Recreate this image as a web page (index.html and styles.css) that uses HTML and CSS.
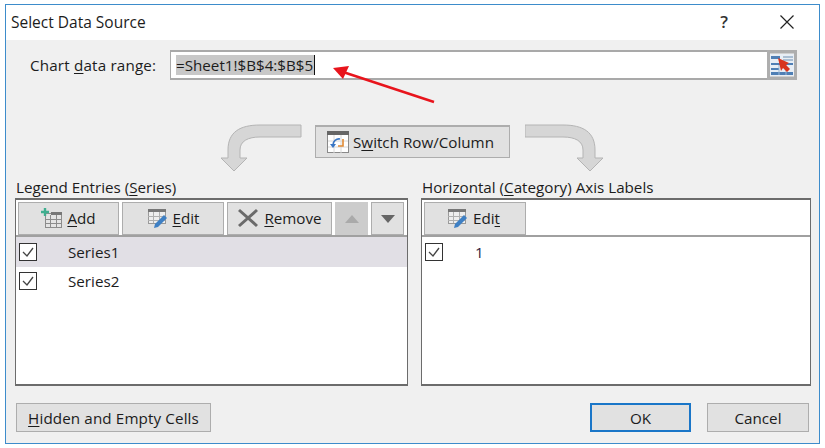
FILE: index.html
```html
<!DOCTYPE html>
<html lang="en">
<head>
<meta charset="utf-8">
<title>Select Data Source</title>
<link rel="stylesheet" href="styles.css">
</head>
<body>
<div class="dialog">
  <header class="titlebar">
    <span class="title">Select Data Source</span>
    <span class="help">?</span>
    <svg class="close" width="14" height="14" viewBox="0 0 14 14"><path d="M0.500 0.500L13.500 13.500M13.500 0.500L0.500 13.500" stroke="#222" stroke-width="1.200" fill="none"/></svg>
  </header>
  <main class="content">
    <div class="range-row">
      <span class="range-label">Chart <u>d</u>ata range:</span>
      <div class="range-field">
        <span class="range-value"><span class="selected">=Sheet1!$B$4:$B$5</span></span>
        <div class="picker">
          <svg width="24" height="24" viewBox="0 0 24 24">
            <rect x="0" y="1" width="24" height="22" fill="#e8eef5"/>
            <path d="M1 3h9v3H1zM1 10h22v2H1zM1 15h8v2H1zM1 19h22v3H1z" fill="#4f7fb5"/>
            <path d="M13 4h10M13 7h10" stroke="#6d8fb0" stroke-width="1"/>
            <path d="M9 12v10M16 12v10" stroke="#9ab6d2" stroke-width="1"/>
            <path d="M8 5l11 5-3 2 4 4-3 3-4-4-2 3z" fill="#d8351f"/>
          </svg>
        </div>
      </div>
    </div>
    <div class="swap-row">
      <svg class="swap-arrow" width="82" height="48" viewBox="0 0 82 48">
        <path d="M81 1H40C20 1 8 8 8 26V34H1L14 47 27 34H20V26C20 17 28 13 40 13H81Z" fill="#d6d6d6" stroke="#b4b4b4"/>
      </svg>
      <button class="btn switch">
        <svg width="22" height="22" viewBox="0 0 22 22">
          <rect x="0.500" y="0.500" width="21" height="21" fill="#fff" stroke="#8a8a8a"/>
          <rect x="0" y="0" width="22" height="4" fill="#666"/>
          <path d="M7 4v18M14 4v18M1 10h20M1 16h20" stroke="#d8d8d8"/>
          <path d="M13 8a6 6 0 0 0-7 6" stroke="#3a76c4" stroke-width="1.600" fill="none"/>
          <path d="M3 13l3 4 3-4z" fill="#3a76c4"/>
          <path d="M16 8v7h-5" stroke="#e08a35" stroke-width="1.600" fill="none"/>
        </svg>
        <span>S<u>w</u>itch Row/Column</span>
      </button>
      <svg class="swap-arrow" width="82" height="48" viewBox="0 0 82 48">
        <path d="M0 1H38C58 1 70 8 70 26V34H78L65 47 52 34H58V26C58 17 50 13 38 13H0Z" fill="#d6d6d6" stroke="#b4b4b4"/>
      </svg>
    </div>
    <div class="panels">
      <section class="panel panel-left">
        <div class="panel-title">Legend Entries (<u>S</u>eries)</div>
        <div class="listbox">
          <div class="toolbar">
            <button class="btn tool tool-add">
              <svg width="22" height="20" viewBox="0 0 22 20">
                <rect x="4.500" y="5.500" width="16" height="14" fill="#e4e4e4" stroke="#8c8c8c"/>
                <rect x="10" y="4" width="11" height="3" fill="#777"/>
                <path d="M9.500 7v12M15.500 7v12M4 11.500h17M4 15.500h17" stroke="#8c8c8c"/>
                <path d="M4 0v8M0 4h8" stroke="#3fae8f" stroke-width="2.400"/>
              </svg>
              <span><u>A</u>dd</span>
            </button>
            <button class="btn tool tool-edit">
              <svg width="22" height="22" viewBox="0 0 22 22">
                <rect x="1.500" y="2.500" width="17" height="14" fill="#eee" stroke="#9a9a9a"/>
                <rect x="1" y="2" width="18" height="3" fill="#777"/>
                <path d="M6.500 5v11M12.500 5v11M1 9.500h17M1 13.500h17" stroke="#b0b0b0"/>
                <path d="M7 21l1-4 9-9 3 3-9 9z" fill="#3f80c4"/>
              </svg>
              <span><u>E</u>dit</span>
            </button>
            <button class="btn tool tool-remove">
              <svg width="22" height="20" viewBox="0 0 22 20"><path d="M2 2L20 18M20 2L2 18" stroke="#6a6a6a" stroke-width="3" fill="none"/></svg>
              <span><u>R</u>emove</span>
            </button>
            <button class="btn tool tool-move disabled" aria-label="Up"><svg width="14" height="8" viewBox="0 0 14 8"><path d="M7 0L14 8H0z" fill="#aaa"/></svg></button>
            <button class="btn tool tool-move" aria-label="Down"><svg width="14" height="8" viewBox="0 0 14 8"><path d="M0 0H14L7 8z" fill="#666"/></svg></button>
          </div>
          <div class="row row-selected"><span class="check"><svg width="12" height="10" viewBox="0 0 12 10"><path d="M1 5l4 4 6-8" stroke="#444" stroke-width="1.300" fill="none"/></svg></span><span class="row-text">Series1</span></div>
          <div class="row"><span class="check"><svg width="12" height="10" viewBox="0 0 12 10"><path d="M1 5l4 4 6-8" stroke="#444" stroke-width="1.300" fill="none"/></svg></span><span class="row-text">Series2</span></div>
        </div>
      </section>
      <section class="panel panel-right">
        <div class="panel-title">Horizontal (<u>C</u>ategory) Axis Labels</div>
        <div class="listbox">
          <div class="toolbar">
            <button class="btn tool tool-edit2">
              <svg width="22" height="22" viewBox="0 0 22 22">
                <rect x="1.500" y="2.500" width="17" height="14" fill="#eee" stroke="#9a9a9a"/>
                <rect x="1" y="2" width="18" height="3" fill="#777"/>
                <path d="M6.500 5v11M12.500 5v11M1 9.500h17M1 13.500h17" stroke="#b0b0b0"/>
                <path d="M7 21l1-4 9-9 3 3-9 9z" fill="#3f80c4"/>
              </svg>
              <span>Edi<u>t</u></span>
            </button>
          </div>
          <div class="row"><span class="check"><svg width="12" height="10" viewBox="0 0 12 10"><path d="M1 5l4 4 6-8" stroke="#444" stroke-width="1.300" fill="none"/></svg></span><span class="row-text">1</span></div>
        </div>
      </section>
    </div>
    <div class="footer">
      <button class="btn foot-hidden"><span><u>H</u>idden and Empty Cells</span></button>
      <div class="foot-right">
        <button class="btn foot-btn foot-ok default">OK</button>
        <button class="btn foot-btn">Cancel</button>
      </div>
    </div>
  </main>
  <svg class="annotation" width="104" height="42" viewBox="0 0 104 42">
    <path d="M101 39L10 9" stroke="#e8141c" stroke-width="2.500" fill="none"/>
    <path d="M0 5L16 3 10 16z" fill="#e8141c"/>
  </svg>
</div>
</body>
</html>
```
FILE: styles.css
```css
* { box-sizing: border-box; }
html, body { margin: 0; padding: 0; background: #fff; }
body { width: 825px; height: 448px; overflow: hidden; font-family: "Open Sans", "Noto Sans", sans-serif; font-size: 15.200px; color: #1c1c1c; }
u { text-underline-offset: 2px; }
.dialog { position: relative; margin: 4px 0 0 5px; width: 815px; height: 440px; border: 1px solid #3d8ccb; background: #f0f0f0; display: flex; flex-direction: column; }
.titlebar { height: 35px; background: #fff; display: flex; align-items: center; padding: 0 0 2px 5px; flex: none; }
.title { font-size: 15.500px; flex: 1; }
.help { font-size: 17px; font-weight: 600; width: 20px; margin-right: 46px; color: #333; text-align: center; }
.close { margin-right: 25px; }
.content { flex: 1; display: flex; flex-direction: column; padding: 10px 9px 11px 9px; }
.range-row { display: flex; align-items: center; height: 30px; padding-left: 15px; padding-right: 13px; }
.range-label { width: 140px; flex: none; letter-spacing: 0.180px; }
.range-field { flex: 1; height: 30px; display: flex; align-items: center; background: #fff; border: 1px solid #a9a9a9; border-width: 2px 1px 2px 1px; }
.range-value { flex: 1; padding-left: 5px; line-height: 20px; }
.selected { background: #c8c8c8; border-right: 1.500px solid #111; display: inline-block; line-height: 20px; padding-right: 1px; }
.picker { width: 30px; height: 30px; margin: -2px -1px -2px 0; background: #d0d0d0; border: 3px solid #aeaeae; display: flex; align-items: center; justify-content: center; flex: none; overflow: hidden; }
.swap-row { display: flex; align-items: flex-start; height: 48px; margin-top: 44px; padding-left: 205px; }
.swap-arrow { flex: none; }
.btn { font: inherit; color: inherit; background: #e1e1e1; border: 1px solid #adadad; display: flex; align-items: center; justify-content: center; gap: 5px; padding: 0; }
.switch { width: 195px; height: 33px; margin: 1px 15px 0 13px; border-width: 2px 1px 1px; gap: 4px; padding-right: 4px; }
.panels { display: flex; justify-content: space-between; margin-top: 5px; height: 209px; }
.panel { display: flex; flex-direction: column; }
.panel-left { width: 393px; }
.panel-right { width: 390px; margin-right: -1px; }
.panel-title { height: 21px; line-height: 20px; padding-left: 1px; white-space: nowrap; }
.listbox { flex: 1; background: #fff; border: 1px solid #6c6c6c; border-width: 2px 1px; display: flex; flex-direction: column; }
.toolbar { display: flex; gap: 3px; height: 37px; padding: 2px; border-bottom: 2px solid #a0a0a0; flex: none; }
.tool { height: 33px; padding-bottom: 2px; }
.tool-add, .tool-edit, .tool-edit2 { width: 101px; gap: 4px; }
.tool-edit { width: 102px; }
.tool-edit2 { width: 102px; padding-right: 3px; }
.tool-remove { width: 105px; }
.tool-move { width: 33px; padding-bottom: 0; }
.tool-move.disabled { background: #cccccc; border-color: #cccccc; }
.row { height: 29.500px; display: flex; align-items: center; padding-left: 3px; flex: none; }
.row-selected { background: #e1dfe5; }
.check { width: 18px; height: 18px; border: 1.500px solid #333; background: #fff; display: flex; align-items: center; justify-content: center; flex: none; }
.row-text { margin-left: 31px; }
.panel-right .row-text { margin-left: 32px; color: #2f2340; }
.footer { display: flex; justify-content: space-between; margin-top: 17px; padding: 0 1px; }
.foot-hidden { width: 195px; height: 29px; letter-spacing: 0.120px; }
.foot-right { display: flex; gap: 16px; }
.foot-btn { width: 102px; height: 29px; }
.foot-ok { width: 101px; }
.default { border: 2px solid #1a76c8; }
.annotation { position: absolute; left: 327px; top: 58px; }
```
